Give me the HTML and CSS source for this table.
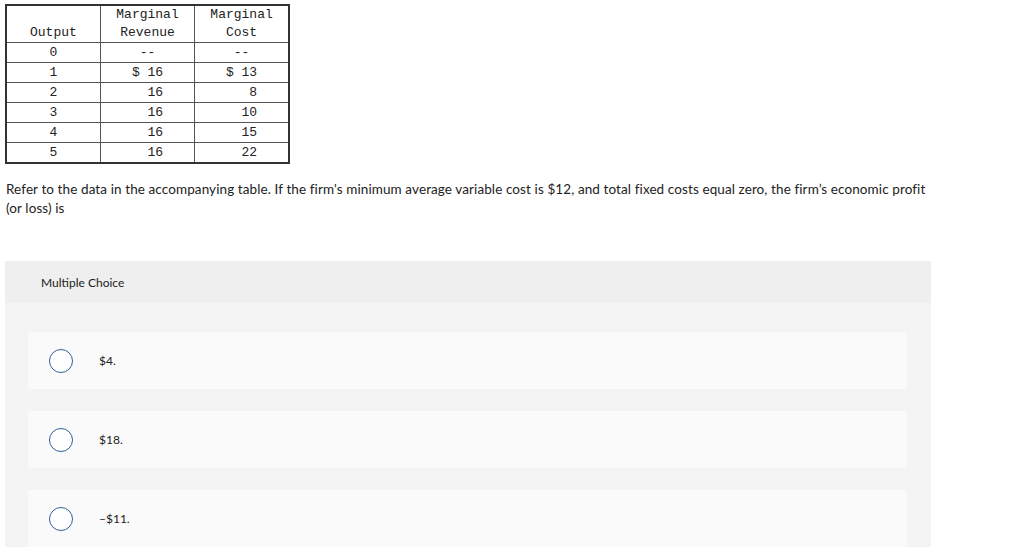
FILE: index.html
```html
<!DOCTYPE html>
<html>
<head>
<meta charset="utf-8">
<link rel="stylesheet" href="styles.css">
</head>
<body>
<div class="page">
  <table class="data">
    <thead>
      <tr><th>Output</th><th>Marginal<br>Revenue</th><th>Marginal<br>Cost</th></tr>
    </thead>
    <tbody>
      <tr><td>0</td><td>--</td><td>--</td></tr>
      <tr><td>1</td><td>$ 16</td><td>$ 13</td></tr>
      <tr><td>2</td><td>  16</td><td>   8</td></tr>
      <tr><td>3</td><td>  16</td><td>  10</td></tr>
      <tr><td>4</td><td>  16</td><td>  15</td></tr>
      <tr><td>5</td><td>  16</td><td>  22</td></tr>
    </tbody>
  </table>
  <p class="question">Refer to the data in the accompanying table. If the firm's minimum average variable cost is $12, and total fixed costs equal zero, the firm’s economic profit (or loss) is</p>
  <div class="mc">
    <div class="mc-head">Multiple Choice</div>
    <div class="mc-body">
      <div class="option"><span class="radio"></span><span class="label">$4.</span></div>
      <div class="option"><span class="radio"></span><span class="label">$18.</span></div>
      <div class="option"><span class="radio"></span><span class="label">–$11.</span></div>
    </div>
  </div>
</div>
</body>
</html>
```

FILE: styles.css
```css
html, body {
  margin: 0;
  padding: 0;
  background: #fff;
}
.page {
  padding: 4px 0 0 5px;
  font-family: "Lato", "Liberation Sans", sans-serif;
  color: #222;
}
.data {
  border-collapse: collapse;
  border: 2px solid #333;
  table-layout: fixed;
  width: 285px;
  font-family: "Liberation Mono", monospace;
  font-size: 13px;
  color: #222;
}
.data th, .data td {
  border: 1px solid #555;
  padding: 0;
  text-align: center;
  white-space: pre;
  font-weight: normal;
}
.data th {
  height: 36px;
  line-height: 18px;
  vertical-align: bottom;
  padding-bottom: 0;
}
.data td {
  height: 19px;
  line-height: 19px;
  padding: 0;
}
.question {
  margin: 16px 0 0 1px;
  width: 935px;
  font-size: 13.5px;
  letter-spacing: 0.1px;
  line-height: 19px;
  color: #222;
}
.mc {
  margin-top: 43px;
  width: 926px;
  background: #f4f4f4;
}
.mc-head {
  height: 42px;
  background: #efefef;
  display: flex;
  align-items: center;
  padding-left: 36px;
  font-size: 12px;
  color: #222;
}
.mc-body {
  padding: 29px 24px 0 23px;
  display: flex;
  flex-direction: column;
  gap: 22px;
}
.option {
  height: 57px;
  background: #fafafa;
  border-radius: 2px;
  display: flex;
  align-items: center;
  padding-left: 21px;
}
.radio {
  width: 22px;
  height: 22px;
  border: 1.2px solid #2f5f99;
  border-radius: 50%;
  background: #fff;
  box-sizing: content-box;
}
.label {
  margin-left: 26px;
  font-size: 12px;
  color: #222;
}
```
